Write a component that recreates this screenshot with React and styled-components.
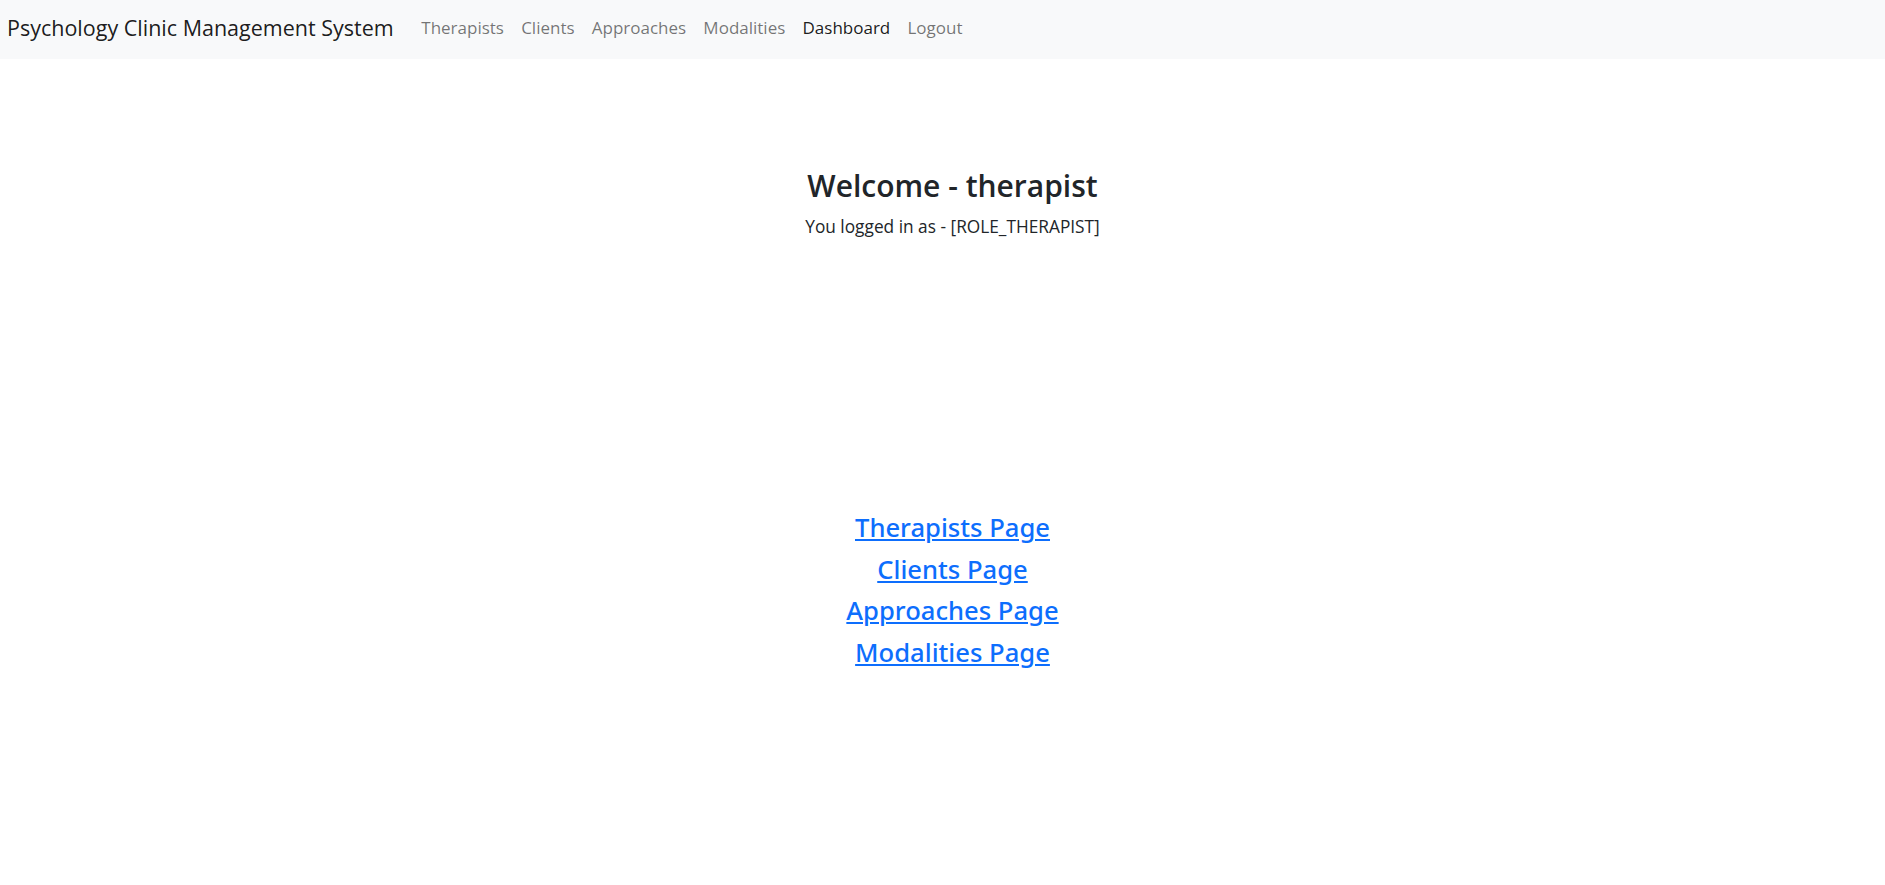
import React from "react";
import styled, { createGlobalStyle } from "styled-components";

const Global = createGlobalStyle`
  html, body { margin: 0; padding: 0; background: #fff; }
  body {
    font-family: "Segoe UI", "Open Sans", "Noto Sans", sans-serif;
    font-size: 16px;
    line-height: 1.5;
    color: #212529;
  }
  * { box-sizing: border-box; }
`;

const Navbar = styled.nav`
  display: flex;
  align-items: center;
  height: 59px;
  padding: 0 8px 4px 7px;
  background: #f8f9fa;
`;

const Brand = styled.a`
  font-size: 21.5px;
  line-height: 30px;
  color: rgba(0, 0, 0, 0.9);
  text-decoration: none;
  margin-right: 19px;
  white-space: nowrap;
`;

const NavList = styled.ul`
  display: flex;
  list-style: none;
  margin: 0;
  padding: 0;
`;

const NavLink = styled.a`
  display: block;
  padding: 8px 8.6px;
  font-size: 17px;
  line-height: 24px;
  text-decoration: none;
  color: ${(p) => (p.$active ? "rgba(0,0,0,0.9)" : "rgba(0,0,0,0.55)")};
`;

const Main = styled.main`
  display: flex;
  flex-direction: column;
  align-items: center;
  text-align: center;
  padding-left: 20px;
`;

const Welcome = styled.section`
  margin-top: 109px;
`;

const Title = styled.h2`
  margin: 0 0 10px;
  font-size: 30px;
  font-weight: 600;
  line-height: 36px;
`;

const Role = styled.p`
  margin: 0;
  font-size: 17.3px;
  line-height: 26px;
`;

const Links = styled.section`
  margin-top: 271px;
`;

const PageLink = styled.h3`
  margin: 0 0 8px;
  font-family: "Segoe UI", "Noto Sans", "Open Sans", sans-serif;
  font-size: 25.6px;
  font-weight: 500;
  line-height: 33.6px;
  a {
    color: #0d6efd;
    text-decoration: underline;
  }
`;

const navItems = ["Therapists", "Clients", "Approaches", "Modalities", "Dashboard", "Logout"];
const pages = ["Therapists Page", "Clients Page", "Approaches Page", "Modalities Page"];

export default function App() {
  return (
    <>
      <Global />
      <Navbar>
        <Brand href="#">Psychology Clinic Management System</Brand>
        <NavList>
          {navItems.map((n) => (
            <li key={n}>
              <NavLink href="#" $active={n === "Dashboard"}>{n}</NavLink>
            </li>
          ))}
        </NavList>
      </Navbar>
      <Main>
        <Welcome>
          <Title>Welcome - therapist</Title>
          <Role>You logged in as - [ROLE_THERAPIST]</Role>
        </Welcome>
        <Links>
          {pages.map((p) => (
            <PageLink key={p}><a href="#">{p}</a></PageLink>
          ))}
        </Links>
      </Main>
    </>
  );
}
